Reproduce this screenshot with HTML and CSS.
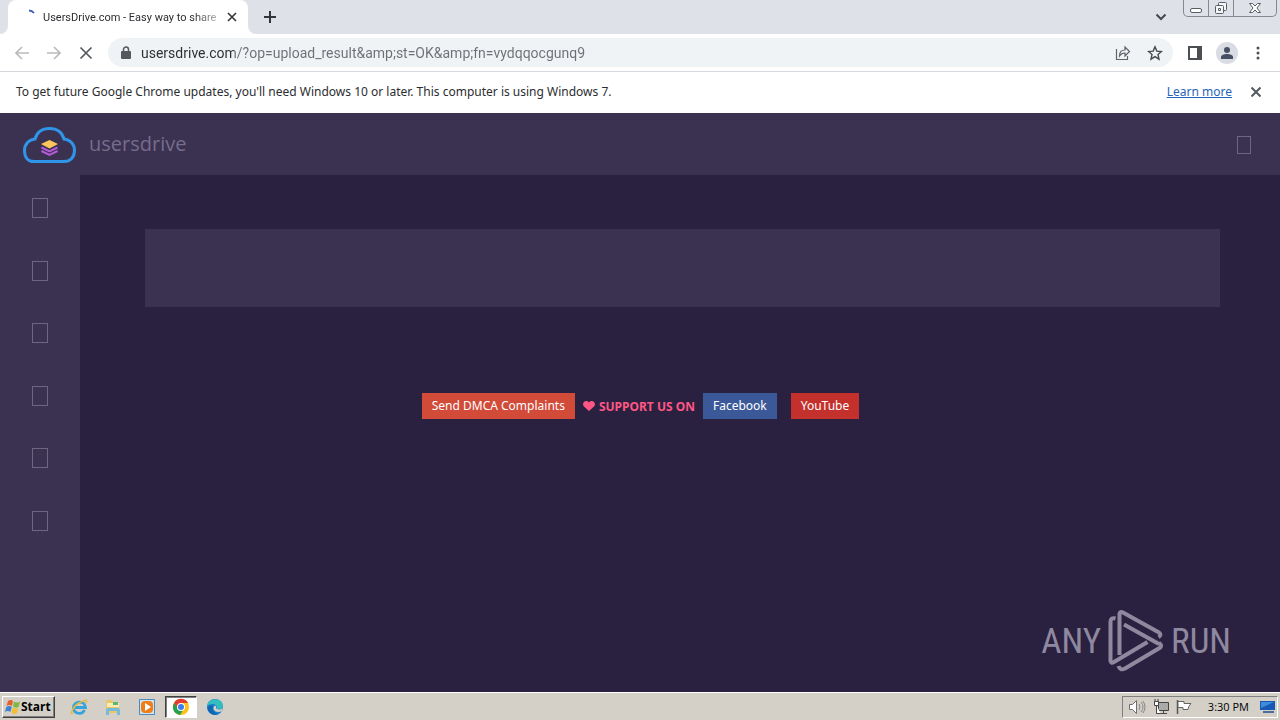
FILE: index.html
```html
<!DOCTYPE html>
<html lang="en">
<head>
    <meta charset="utf-8">
    <title>UsersDrive.com - Easy way to share</title>
    <link rel="stylesheet" href="styles.css">
</head>
<body>
    <header class="tabstrip">
        <div class="tab-edge"></div>
        <div class="tab">
            <svg class="spinner" width="16" height="16" viewBox="0 0 16 16"><path d="M6 2.500q3 0 5 2.500" fill="none" stroke="#3d62b8" stroke-width="2"/></svg>
            <span class="tab-title">UsersDrive.com - Easy way to share</span>
            <button class="icon-btn" aria-label="Close tab"><svg width="10" height="10" viewBox="0 0 10 10"><path d="M1 1l8 8M9 1l-8 8" stroke="#333639" stroke-width="1.600"/></svg></button>
        </div>
        <div class="tab-rest">
            <button class="icon-btn" aria-label="New tab"><svg width="12" height="12" viewBox="0 0 12 12"><path d="M6 0v12M0 6h12" stroke="#333639" stroke-width="2"/></svg></button>
            <button class="icon-btn tab-search" aria-label="Search tabs"><svg width="12" height="8" viewBox="0 0 12 8"><path d="M1.500 1.500L6 6l4.500-4.500" fill="none" stroke="#45494d" stroke-width="2"/></svg></button>
            <div class="window-controls">
                <button class="win-btn" aria-label="Minimize"><svg width="14" height="14" viewBox="0 0 14 14"><rect x="1.500" y="7.500" width="11" height="4" rx="1.500" fill="#fff" stroke="#5a5e64"/></svg></button>
                <button class="win-btn" aria-label="Restore"><svg width="14" height="14" viewBox="0 0 14 14"><g fill="#f4f5f7" stroke="#5a5e64"><rect x="4.500" y="1.500" width="8" height="8" rx="1"/><rect x="1.500" y="4.500" width="8" height="8" rx="1"/><path d="M4.500 7.500h2v2h-2z"/></g></svg></button>
                <button class="win-btn win-close" aria-label="Close"><svg width="14" height="14" viewBox="0 0 14 14"><path d="M1.500 2.500h3L7 5l2.500-2.500h3L9 7l3.500 4.500h-3L7 9l-2.500 2.500h-3L5 7z" fill="#fff" stroke="#5a5e64"/></svg></button>
            </div>
        </div>
    </header>

    <div class="toolbar">
        <button class="icon-btn nav-btn" aria-label="Back"><svg width="14" height="14" viewBox="0 0 14 14"><path d="M14 7H1.500M7 1L1 7l6 6" fill="none" stroke="#b8babd" stroke-width="1.600"/></svg></button>
        <button class="icon-btn nav-btn" aria-label="Forward"><svg width="14" height="14" viewBox="0 0 14 14"><path d="M0 7h12.500M7 1l6 6-6 6" fill="none" stroke="#b8babd" stroke-width="1.600"/></svg></button>
        <button class="icon-btn nav-btn" aria-label="Stop"><svg width="14" height="14" viewBox="0 0 14 14"><path d="M1.500 1.500l11 11M12.500 1.500l-11 11" stroke="#55595e" stroke-width="1.700"/></svg></button>
        <div class="omnibox">
            <svg width="10" height="13" viewBox="0 0 10 13"><path d="M2.500 6V3.500a2.500 2.500 0 0 1 5 0V6" fill="none" stroke="#55595e" stroke-width="1.500"/><rect y="5" width="10" height="8" rx="1" fill="#55595e"/></svg>
            <input class="url" type="text" aria-label="Address" value="usersdrive.com/?op=upload_result&amp;amp;st=OK&amp;amp;fn=vydqqocgunq9">
            <button class="icon-btn" aria-label="Share"><svg width="16" height="16" viewBox="0 0 16 16"><path d="M1.500 4v10.500h11V11M4.500 11c0-4 2-6 5.500-6V2l4.500 4.500L10 11V8c-2.500 0-4 .5-5.500 3z" fill="none" stroke="#5f6368" stroke-width="1.200"/></svg></button>
            <button class="icon-btn" aria-label="Bookmark"><svg width="16" height="16" viewBox="0 0 16 16"><path d="M8 1.800l1.800 4.300 4.700.4L11 9.600l1 4.600-4-2.500-4 2.500 1-4.600L1.500 6.500l4.700-.4z" fill="none" stroke="#45494d" stroke-width="1.400"/></svg></button>
        </div>
        <button class="icon-btn" aria-label="Side panel"><svg width="14" height="14" viewBox="0 0 14 14"><path d="M0 0h14v14H0zM2 2v10h7V2z" fill="#4b4f54" fill-rule="evenodd"/></svg></button>
        <button class="icon-btn avatar" aria-label="Profile"><svg width="14" height="12" viewBox="0 0 14 12"><circle cx="7" cy="3" r="3" fill="#465064"/><path d="M1 12v-2c0-4 12-4 12 0v2z" fill="#465064"/></svg></button>
        <button class="icon-btn menu-btn" aria-label="Menu"><svg width="4" height="14" viewBox="0 0 4 14"><g fill="#4b4f54"><circle cx="2" cy="2" r="1.500"/><circle cx="2" cy="7" r="1.500"/><circle cx="2" cy="12" r="1.500"/></g></svg></button>
    </div>

    <div class="infobar">
        <span>To get future Google Chrome updates, you'll need Windows 10 or later. This computer is using Windows 7.</span>
        <a class="learn" href="#">Learn more</a>
        <button class="icon-btn" aria-label="Dismiss"><svg width="10" height="10" viewBox="0 0 10 10"><path d="M.5.5l9 9M9.500.5l-9 9" stroke="#55595e" stroke-width="2"/></svg></button>
    </div>

    <div class="site">
        <div class="site-header">
            <a class="brand" href="#">
                <svg width="54" height="38" viewBox="0 0 54 38">
                    <path d="M12 35.500C5.500 35.500 2.500 31 2.500 24.500S7 13.500 13 13C15 6 20.500 2.500 27.500 2.500S40 6 42 13c6 .5 10.500 5 10.500 11.500s-4 11-10.500 11z" fill="none" stroke="#2f95e8" stroke-width="3"/>
                    <path d="M19 18l8.500-4 8.500 4-8.500 4.500z" fill="#fbc75d"/>
                    <path d="M19.500 21.500l8 4 8-4M19.500 25l8 4 8-4" fill="none" stroke="#b65bd8" stroke-width="2"/>
                </svg>
                <span class="brand-name">usersdrive</span>
            </a>
            <button class="icon-btn" aria-label="Account"><span class="glyph glyph-sm"></span></button>
        </div>
        <div class="site-body">
            <nav class="sidebar">
                <a href="#" aria-label="Home"><span class="glyph"></span></a>
                <a href="#" aria-label="Upload"><span class="glyph"></span></a>
                <a href="#" aria-label="Files"><span class="glyph"></span></a>
                <a href="#" aria-label="Premium"><span class="glyph"></span></a>
                <a href="#" aria-label="Help"><span class="glyph"></span></a>
                <a href="#" aria-label="Contact"><span class="glyph"></span></a>
            </nav>
            <main class="content">
                <section class="panel"></section>
                <footer class="links">
                    <a class="btn dmca" href="#">Send DMCA Complaints</a>
                    <span class="support"><svg width="12" height="10" viewBox="0 0 12 10"><path d="M6 10L1 5.500C-2 2 3-2.500 6 1.500 9-2.500 14 2 11 5.500z" fill="#ff5685"/></svg>SUPPORT US ON</span>
                    <a class="btn facebook" href="#">Facebook</a>
                    <a class="btn youtube" href="#">YouTube</a>
                </footer>
            </main>
        </div>
        <div class="watermark">
            <span>ANY</span>
            <svg width="56" height="62" viewBox="0 0 56 62">
                <g fill="none" stroke="#8f89a0" stroke-width="4" stroke-linejoin="round">
                    <path d="M7.500 8.500Q2.500 7 2.500 12V51Q3 54 6 52L39.500 32"/>
                    <path d="M11.500 45V4Q12 1 15 2.500L51 22.500Q54 25 50.500 27"/>
                    <path d="M16 14.500L51 34"/>
                    <path d="M10.500 56Q12 61 17 58.500L51.500 38Q55 35.500 51 33"/>
                </g>
            </svg>
            <span>RUN</span>
        </div>
    </div>

    <footer class="taskbar">
        <button class="start">
            <svg width="16" height="16" viewBox="0 0 16 16"><path d="M3 2q3-2 5 0L7 7Q4 5 1.500 7z" fill="#e5602b"/><path d="M9 2.500q3 2 6 0L13.500 8q-3 1.500-5.500-.5z" fill="#7fb741"/><path d="M1.300 8q3-2 5.500 0l-1.500 5Q3 11 0 13z" fill="#3d83cd"/><path d="M7.800 8.500q3 2 5.500.5L12 14q-3 2-5.500-.5z" fill="#f5bd32"/></svg>
            Start
        </button>
        <button class="task" aria-label="Internet Explorer"><svg width="18" height="18" viewBox="0 0 18 18"><path d="M14.500 12C12 17.500 3.500 16 3.500 9.500c0-7 11.500-7.500 12 0H5" fill="none" stroke="#36a4dc" stroke-width="2.800"/><path d="M3 15c-4 3 0-7 6-10s9-4 7 0" fill="none" stroke="#e9b93a" stroke-width="1.500"/></svg></button>
        <button class="task" aria-label="Explorer"><svg width="18" height="18" viewBox="0 0 18 18"><path d="M2 4l1-2h5l1 2h6v11H2z" fill="#e8c766"/><path d="M3 5h12v4H3z" fill="#f9edb4"/><path d="M9 4h5v3H9z" fill="#5eb56d"/><path d="M2 17v-5q0-2 2-2h10q2 0 2 2v5h-3v-4H5v4z" fill="#78b9dc"/></svg></button>
        <button class="task" aria-label="Media Player"><svg width="18" height="18" viewBox="0 0 18 18"><path d="M1.500 1.500h15v15h-15z" fill="#cfe5f3" stroke="#4b8bbd"/><rect x="3" y="3" width="12" height="12" rx="4" fill="#ef7d19"/><path d="M7 5l6 4-6 4z" fill="#fff"/></svg></button>
        <button class="task active" aria-label="Chrome"><svg width="18" height="18" viewBox="0 0 18 18"><circle cx="9" cy="9" r="8" fill="#fbc116"/><path d="M2 5a8 8 0 0 1 14 0H9L5.500 11z" fill="#df3e31"/><path d="M2 5a8 8 0 0 0 6 12l4-6.500H6z" fill="#25a04c"/><circle cx="9" cy="9" r="4" fill="#fff"/><circle cx="9" cy="9" r="3" fill="#3c7de8"/></svg></button>
        <button class="task" aria-label="Edge"><svg width="18" height="18" viewBox="0 0 18 18"><circle cx="9" cy="9" r="8" fill="#1580cf"/><path d="M1.200 8C2-.5 16-1 17 7.500c0 4-5 4.500-7 3 2-2-.5-5-3.500-4.500Q3 6 1.200 8z" fill="#35bdbd"/><path d="M10 10.500c2 1.500 5 1.500 7-1l-1.500 4Q9 15 7.500 11 7 8 9.500 7.500q1 1 .5 3z" fill="#d4d0c8"/><path d="M7 8q-2 6 5 8.500Q4 18 1.500 11 2 6 7 8z" fill="#1265b1"/></svg></button>
        <div class="tray">
            <svg width="18" height="16" viewBox="0 0 18 16"><path d="M1.500 5.500h3l4-4v13l-4-4h-3z" fill="#fff" stroke="#6e6e6e"/><path d="M11 5q2 3 0 6M13 3q4 5 0 10M15 2q4 6 0 12" fill="none" stroke="#868686"/></svg>
            <svg width="16" height="16" viewBox="0 0 16 16"><path d="M5.500 3.500h10v8h-10zM7 14.500h7M10.500 12v2" fill="#aaa" stroke="#444"/><path d="M1.500 2.500h4v4h-4zM3.500 6v8.500h4M2 0v3M5 0v3" fill="#fff" stroke="#444"/></svg>
            <svg width="16" height="16" viewBox="0 0 16 16"><path d="M1.500 1v14" stroke="#555" stroke-width="1.500"/><path d="M2 2.500h6v2h7q-3 3-3 6H7v-2H2z" fill="#fff" stroke="#666"/></svg>
            <time class="clock">3:30 PM</time>
            <svg width="16" height="14" viewBox="0 0 16 14"><path d="M0 1h15v9H0z" fill="#1659b5"/><path d="M1 2h13L1 8z" fill="#3f8bdb"/><path d="M3 12h11" stroke="#4a6f9d" stroke-width="2"/></svg>
        </div>
    </footer>
</body>
</html>
```
FILE: styles.css
```css
* {
    box-sizing: border-box;
}

body {
    margin: 0;
    min-height: 100vh;
    display: flex;
    flex-direction: column;
    font-family: "Noto Sans", "Open Sans", sans-serif;
    font-size: 12px;
    color: #2b2d30;
    background: #fff;
}

svg {
    display: block;
    flex: none;
}

a {
    text-decoration: none;
}

button {
    font: inherit;
    color: inherit;
}

.icon-btn {
    display: flex;
    flex: none;
    padding: 0;
    border: 0;
    background: none;
}

/* browser window */
.tabstrip {
    display: flex;
    height: 34px;
    background: #fff;
}

.tab-edge {
    width: 8px;
    background: #dee1e8;
    border-bottom-right-radius: 8px;
}

.tab {
    display: flex;
    align-items: center;
    width: 240px;
    padding: 0 11px 0 15px;
    background: #fff;
    box-shadow: 0 0 0 8px #dee1e8;
    clip-path: inset(0);
    border-radius: 8px 8px 0 0;
}

.spinner {
    align-self: flex-start;
    margin-top: 8px;
}

.tab-title {
    flex: 1;
    min-width: 0;
    margin: 0 8px 0 4px;
    font: 11px Roboto, sans-serif;
    white-space: nowrap;
    -webkit-mask-image: linear-gradient(to right, #000 85%, rgba(0, 0, 0, 0.3));
    mask-image: linear-gradient(to right, #000 85%, rgba(0, 0, 0, 0.3));
}

.tab-rest {
    flex: 1;
    display: flex;
    align-items: center;
    padding: 0 3px 0 16px;
    background: #dee1e8;
    border-bottom-left-radius: 8px;
}

.tab-search {
    margin: 0 16px 0 auto;
}

.window-controls {
    display: flex;
    align-self: flex-start;
    height: 17px;
    border: 1px solid #85898f;
    border-top: 0;
    border-radius: 0 0 5px 5px;
}

.win-btn {
    display: flex;
    justify-content: center;
    align-items: center;
    width: 25px;
    padding: 0;
    border: 0;
    border-right: 1px solid #85898f;
    background: none;
}

.win-close {
    width: 42px;
    border-right: 0;
}

.toolbar {
    display: flex;
    align-items: center;
    gap: 18px;
    height: 38px;
    padding: 0 20px 0 15px;
    border-bottom: 1px solid #d5d8dc;
}

.omnibox {
    flex: 1;
    display: flex;
    align-items: center;
    gap: 16px;
    height: 29px;
    margin-right: -3px;
    padding: 0 10px 0 13px;
    border-radius: 15px;
    background: #f0f3f5;
}

.nav-btn + .omnibox {
    margin-left: -3px;
}

.url {
    flex: 1;
    min-width: 0;
    margin-left: -6px;
    padding: 0;
    border: 0;
    outline: 0;
    font: 14px Roboto, sans-serif;
    color: transparent;
    background: linear-gradient(to right, #2b2d30 93px, #6c7075 93px);
    -webkit-background-clip: text;
    background-clip: text;
}

.avatar {
    justify-content: center;
    align-items: center;
    width: 22px;
    height: 22px;
    margin: 0 -4px;
    border-radius: 50%;
    background: #d9dde3;
}

.menu-btn {
    margin-left: 4px;
}

.infobar {
    display: flex;
    align-items: center;
    height: 41px;
    padding: 0 19px 2px 16px;
}

.learn {
    margin: 0 19px 0 auto;
    color: #1f65b5;
    text-decoration: underline;
}

/* usersdrive site */
.site {
    position: relative;
    flex: 1;
    display: flex;
    flex-direction: column;
    background: #2a2140;
}

.site-header {
    display: flex;
    justify-content: space-between;
    align-items: center;
    height: 62px;
    padding: 2px 29px 0 22px;
    background: #3b3151;
}

.brand {
    display: flex;
    align-items: center;
    gap: 13px;
    color: #766d8c;
}

.brand-name {
    padding-bottom: 4px;
    font-family: "Open Sans", sans-serif;
    font-size: 20px;
}

.glyph {
    display: block;
    width: 16px;
    height: 20px;
    border: 1px solid #6d6681;
}

.glyph-sm {
    width: 14px;
    height: 18px;
}

.site-body {
    flex: 1;
    display: flex;
}

.sidebar {
    display: grid;
    grid-template-rows: repeat(6, 1fr);
    width: 80px;
    padding: 2px 0 140px;
    background: #3b3151;
}

.sidebar a {
    display: flex;
    justify-content: center;
    align-items: center;
}

.content {
    flex: 1;
    padding: 54px 60px 0 65px;
}

.panel {
    height: 78px;
    background: #3b3151;
}

.links {
    display: flex;
    justify-content: center;
    align-items: center;
    margin: 86px 84px 0 0;
}

.btn {
    padding: 0 10px;
    line-height: 26px;
    color: #fff;
}

.dmca {
    background: #d24a38;
}

.support {
    display: flex;
    align-items: center;
    gap: 4px;
    margin: 0 8px;
    font-weight: 700;
    color: #ff5685;
}

.facebook {
    margin-right: 14px;
    background: #3b5998;
}

.youtube {
    background: #c4302b;
}

.watermark {
    position: absolute;
    right: 49px;
    bottom: 20px;
    display: flex;
    align-items: center;
    gap: 7px;
    font: 35px "Roboto Condensed", "Liberation Sans Narrow", Roboto, sans-serif;
    color: #8f89a0;
}

/* windows taskbar */
.taskbar {
    display: flex;
    align-items: center;
    height: 28px;
    padding: 0 2px;
    border-top: 1px solid #fff;
    background: #d4d0c8;
    color: #000;
}

.start {
    display: flex;
    align-items: center;
    height: 22px;
    margin-right: 7px;
    padding: 0 3px 0 2px;
    border: 1px solid;
    border-color: #fff #404040 #404040 #fff;
    box-shadow: inset -1px -1px #808080;
    background: #d4d0c8;
    font-family: "Open Sans", sans-serif;
    font-weight: 700;
}

.task {
    display: flex;
    justify-content: center;
    align-items: center;
    width: 34px;
    height: 22px;
    padding: 0;
    border: 0;
    background: none;
}

.task.active {
    width: 32px;
    margin: 0 1px;
    border: 1px solid;
    border-color: #404040 #fff #fff #404040;
    box-shadow: inset 1px 1px #808080;
    background: #fff;
}

.tray {
    display: flex;
    align-items: center;
    gap: 7px;
    height: 22px;
    margin-left: auto;
    padding: 0 1px 0 5px;
    border: 1px solid;
    border-color: #808080 #fff #fff #808080;
}

.clock {
    margin: 0 4px 0 9px;
    font-family: "Open Sans", sans-serif;
    font-size: 11px;
}
```
